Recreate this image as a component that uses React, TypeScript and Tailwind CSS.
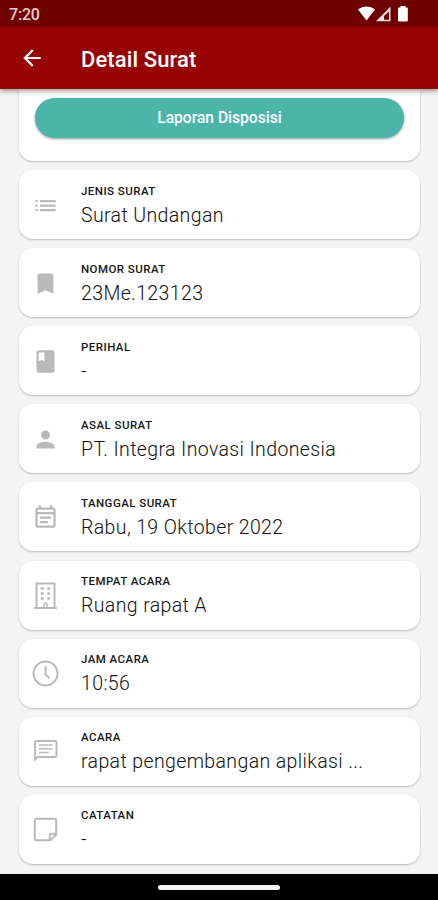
import type { ComponentType, ReactNode } from "react";
import {
  MdArrowBack,
  MdBookmark,
  MdClass,
  MdList,
  MdOutlineEventNote,
  MdPerson,
} from "react-icons/md";

type IconProps = { size?: number };

type Row = {
  label: string;
  value: string;
  icon: ComponentType<IconProps>;
};

function LineIcon({ size = 27, children }: IconProps & { children: ReactNode }) {
  return (
    <svg width={size} height={size} viewBox="0 0 27 27" fill="none" stroke="currentColor" strokeWidth="2">
      {children}
    </svg>
  );
}

function BuildingIcon({ size }: IconProps) {
  return (
    <LineIcon size={size}>
      <path d="M4.500 25.500V1.500H22.500V25.500" />
      <path d="M2 26H25" />
      <path
        d="M8.700 6.500h3M8.700 11.500h3M8.700 16.500h3M15.300 6.500h3M15.300 11.500h3M15.300 16.500h3"
        strokeWidth="2.600"
      />
      <path d="M12 25.500V22.500a1.500 1.500 0 0 1 3 0V25.500" strokeWidth="1.500" />
    </LineIcon>
  );
}

function ClockIcon({ size }: IconProps) {
  return (
    <LineIcon size={size}>
      <circle cx="13.500" cy="13.500" r="12" />
      <path d="M13.500 6V14.500L17.600 18.200" />
    </LineIcon>
  );
}

function ChatIcon({ size }: IconProps) {
  return (
    <LineIcon size={size}>
      <path d="M3 20.500V4.500A1.500 1.500 0 0 1 4.500 3H23a1.500 1.500 0 0 1 1.500 1.500V17.500A1.500 1.500 0 0 1 23 19H5.500L3 21.500Z" strokeWidth="1.900" />
      <path d="M7 7H20.500M7 10.700H20.500M7 14.500H16.500" strokeWidth="1.600" />
    </LineIcon>
  );
}

function NoteIcon({ size }: IconProps) {
  return (
    <LineIcon size={size}>
      <path d="M4.500 2.800H22.500A1.700 1.700 0 0 1 24.200 4.500V18.500L18.500 24.200H4.500A1.700 1.700 0 0 1 2.800 22.500V4.500A1.700 1.700 0 0 1 4.500 2.800Z" />
      <path d="M24 17.800H18.800a1 1 0 0 0-1 1V24" />
    </LineIcon>
  );
}

const rows: Row[] = [
  { label: "JENIS SURAT", value: "Surat Undangan", icon: MdList },
  { label: "NOMOR SURAT", value: "23Me.123123", icon: MdBookmark },
  { label: "PERIHAL", value: "-", icon: MdClass },
  { label: "ASAL SURAT", value: "PT. Integra Inovasi Indonesia", icon: MdPerson },
  { label: "TANGGAL SURAT", value: "Rabu, 19 Oktober 2022", icon: MdOutlineEventNote },
  { label: "TEMPAT ACARA", value: "Ruang rapat A", icon: BuildingIcon },
  { label: "JAM ACARA", value: "10:56", icon: ClockIcon },
  { label: "ACARA", value: "rapat pengembangan aplikasi ...", icon: ChatIcon },
  { label: "CATATAN", value: "-", icon: NoteIcon },
];

function StatusBar() {
  return (
    <div className="flex h-[27px] items-center justify-between bg-[#6f0000] pr-[30px] pl-[9px]">
      <span className="pt-[2px] text-[16px] leading-none font-medium tracking-[-0.2px] text-[#e8cccc]">7:20</span>
      <svg width="50" height="16" viewBox="0 0 50 16" className="text-white" fill="currentColor">
        <path d="M0 3.600C4.800-.500 12.200-.500 17 3.600L8.500 14.500Z" />
        <path d="M32.500.500V15.300H18Z" fill="#f3dede" />
        <path d="M31 5.500V13.700H26V10Z" fill="#6f0000" />
        <path d="M42.500 0h5v1.600h1.300a1 1 0 0 1 1 1V14.500a1 1 0 0 1-1 1H41a1 1 0 0 1-1-1V2.600a1 1 0 0 1 1-1h1.500Z" />
      </svg>
    </div>
  );
}

function DetailCard({ row }: { row: Row }) {
  const Icon = row.icon;
  return (
    <div className="flex h-[69px] shrink-0 items-center rounded-[14px] bg-white shadow-[0_1px_2px_rgba(0,0,0,0.24)]">
      <div className="flex w-[52px] justify-center pt-px text-[#b9b9b9]">
        <Icon size={27} />
      </div>
      <div className="flex flex-col pt-[3px] pl-[10px]">
        <span className="text-[11.5px] leading-[14px] font-medium tracking-[0.45px] text-[#161616]">{row.label}</span>
        <span className="mt-[5px] text-[19.5px] leading-[26px] font-light tracking-[0.38px] whitespace-nowrap text-[#111]">
          {row.value}
        </span>
      </div>
    </div>
  );
}

export default function App() {
  return (
    <div className="flex h-[900px] w-[438px] flex-col overflow-hidden bg-[#f4f4f4] font-[Roboto,sans-serif]">
      <StatusBar />
      <header className="relative z-10 flex h-[62px] shrink-0 items-center bg-[#970303] pl-[19px] text-white shadow-[0_2px_5px_rgba(0,0,0,0.4)]">
        <MdArrowBack size={26} />
        <h1 className="ml-[36px] pt-[3px] text-[22px] leading-none font-medium tracking-[0.1px]">Detail Surat</h1>
      </header>
      <main className="flex h-[785px] shrink-0 flex-col gap-[9.1px] overflow-hidden pr-[18px] pl-[19px]">
        <div className="h-[72px] shrink-0 rounded-b-[14px] bg-white px-4 pt-[9px] shadow-[0_1px_2px_rgba(0,0,0,0.24)]">
          <button className="flex h-[40px] w-full items-center justify-center rounded-full bg-[#4bb5aa] pt-px text-[15.6px] font-medium text-white shadow-[0_1px_3px_rgba(0,0,0,0.4)]">
            Laporan Disposisi
          </button>
        </div>
        {rows.map((row) => (
          <DetailCard key={row.label} row={row} />
        ))}
      </main>
      <footer className="flex h-[26px] shrink-0 items-center justify-center bg-black">
        <div className="h-[5px] w-[122px] rounded-full bg-[#f4f4f4]" />
      </footer>
    </div>
  );
}
